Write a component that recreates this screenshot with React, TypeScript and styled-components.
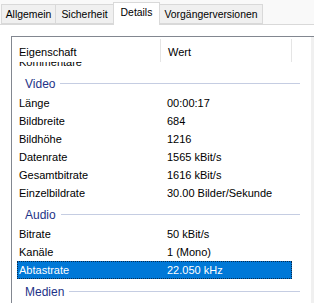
import React from 'react';
import styled, {createGlobalStyle} from 'styled-components';

const GlobalStyle = createGlobalStyle`
    html, body {
        margin: 0;
        padding: 0;
        background: #ffffff;
    }
`;

const Window = styled.div`
    width: 314px;
    height: 303px;
    overflow: hidden;
    background: #ffffff;
    font-family: "Liberation Sans", Arial, sans-serif;
    font-size: 11px;
    color: #000000;
`;

const TabStrip = styled.div`
    display: flex;
    align-items: flex-end;
    height: 25px;
    padding-left: 1px;
    background: #f9f9f9;
    border-bottom: 1px solid #d9d9d9;
    box-sizing: border-box;
`;

const Tab = styled.div<{ $active?: boolean; $width: number }>`
    box-sizing: border-box;
    width: ${p => p.$width}px;
    height: ${p => p.$active ? '23px' : '20px'};
    margin-bottom: ${p => p.$active ? '-1px' : '0'};
    padding-bottom: ${p => p.$active ? '3px' : '0'};
    display: flex;
    align-items: center;
    justify-content: center;
    background: ${p => p.$active ? '#ffffff' : '#f0f0f0'};
    border: 1px solid #d9d9d9;
    border-bottom: ${p => p.$active ? 'none' : '1px solid #d9d9d9'};
    margin-right: -1px;
    position: relative;
    z-index: ${p => p.$active ? 1 : 0};
    font-size: 10.4px;
    white-space: nowrap;
`;

const Page = styled.div`
    padding: 11px 0 0 11px;
    background: #ffffff;
`;

const ListView = styled.div`
    display: flex;
    width: 317px;
    height: 270px;
    border-left: 1px solid #828790;
    border-top: 1px solid #828790;
    box-sizing: border-box;
`;

const ListMain = styled.div`
    flex: 1;
    display: flex;
    flex-direction: column;
    min-width: 0;
`;

const Scrollbar = styled.div`
    width: 17px;
    background: #f0f0f0;
`;

const Header = styled.div`
    display: flex;
    height: 25px;
    flex-shrink: 0;
    background: #ffffff;
    position: relative;
    z-index: 1;
`;

const HeaderCell = styled.div<{ $width: number }>`
    width: ${p => p.$width}px;
    box-sizing: border-box;
    padding: 3px 0 0 7px;
    margin-top: 2px;
    display: flex;
    align-items: center;
    border-right: 1px solid #e5e5e5;
    white-space: nowrap;
`;

const Body = styled.div`
    flex: 1;
    overflow: hidden;
`;

const Scrolled = styled.div`
    margin-top: -9px;
`;

const GroupHeader = styled.div`
    display: flex;
    align-items: center;
    height: 23px;
    padding: 2px 11px 0 13px;
    box-sizing: border-box;
    gap: 5px;
    color: #1e3287;
    font-size: 12px;
`;

const GroupLine = styled.div`
    flex: 1;
    height: 1px;
    background: #c5cde2;
`;

const Row = styled.div<{ $selected?: boolean }>`
    display: flex;
    height: 18px;
    width: 275px;
    margin-left: 5px;
    box-sizing: border-box;
    align-items: center;
    background: ${p => p.$selected ? '#0078d7' : 'transparent'};
    color: ${p => p.$selected ? '#ffffff' : '#000000'};
    outline: ${p => p.$selected ? '1px dotted #0a2a4a' : 'none'};
    outline-offset: -1px;
    white-space: nowrap;
`;

const NameCell = styled.div`
    width: 144px;
    padding-left: 2px;
    box-sizing: border-box;
`;

const ValueCell = styled.div`
    padding-left: 6px;
`;

type Item = { name: string; value: string };
type Group = { title: string; items: Item[] };

const groups: Group[] = [
    {
        title: 'Video',
        items: [
            {name: 'Länge', value: '00:00:17'},
            {name: 'Bildbreite', value: '684'},
            {name: 'Bildhöhe', value: '1216'},
            {name: 'Datenrate', value: '1565 kBit/s'},
            {name: 'Gesamtbitrate', value: '1616 kBit/s'},
            {name: 'Einzelbildrate', value: '30.00 Bilder/Sekunde'},
        ],
    },
    {
        title: 'Audio',
        items: [
            {name: 'Bitrate', value: '50 kBit/s'},
            {name: 'Kanäle', value: '1 (Mono)'},
            {name: 'Abtastrate', value: '22.050 kHz'},
        ],
    },
    {title: 'Medien', items: []},
];

const tabs = [
    {label: 'Allgemein', width: 55},
    {label: 'Sicherheit', width: 59},
    {label: 'Details', width: 47},
    {label: 'Vorgängerversionen', width: 104},
];

export default function App() {
    return (
        <Window>
            <GlobalStyle/>
            <TabStrip>
                {tabs.map(t => (
                    <Tab key={t.label} $width={t.width} $active={t.label === 'Details'}>{t.label}</Tab>
                ))}
            </TabStrip>
            <Page>
                <ListView>
                    <ListMain>
                        <Header>
                            <HeaderCell $width={149}>Eigenschaft</HeaderCell>
                            <HeaderCell $width={131}>Wert</HeaderCell>
                        </Header>
                        <Body>
                            <Scrolled>
                                <Row>
                                    <NameCell>Kommentare</NameCell>
                                    <ValueCell></ValueCell>
                                </Row>
                                {groups.map(g => (
                                    <React.Fragment key={g.title}>
                                        <GroupHeader>
                                            {g.title}
                                            <GroupLine/>
                                        </GroupHeader>
                                        {g.items.map(i => (
                                            <Row key={i.name} $selected={i.name === 'Abtastrate'}>
                                                <NameCell>{i.name}</NameCell>
                                                <ValueCell>{i.value}</ValueCell>
                                            </Row>
                                        ))}
                                    </React.Fragment>
                                ))}
                            </Scrolled>
                        </Body>
                    </ListMain>
                    <Scrollbar/>
                </ListView>
            </Page>
        </Window>
    );
}
